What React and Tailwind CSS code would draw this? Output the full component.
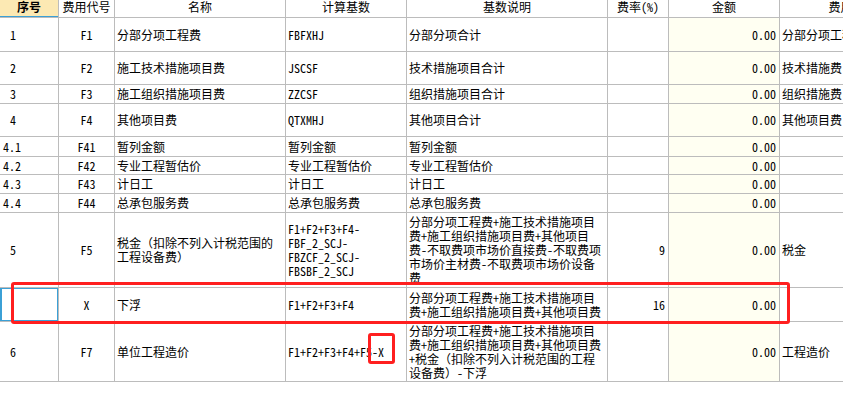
const rows = [
  { h: "h-[34px]", no: "1", code: "F1", name: ["分部分项工程费"], base: ["FBFXHJ"], desc: ["分部分项合计"], rate: "", type: "分部分项工程费" },
  { h: "h-[33px]", no: "2", code: "F2", name: ["施工技术措施项目费"], base: ["JSCSF"], desc: ["技术措施项目合计"], rate: "", type: "技术措施费" },
  { h: "h-[19px]", no: "3", code: "F3", name: ["施工组织措施项目费"], base: ["ZZCSF"], desc: ["组织措施项目合计"], rate: "", type: "组织措施费" },
  { h: "h-[33px]", no: "4", code: "F4", name: ["其他项目费"], base: ["QTXMHJ"], desc: ["其他项目合计"], rate: "", type: "其他项目费" },
  { h: "h-[20px]", no: "4.1", sub: true, code: "F41", name: ["暂列金额"], base: ["暂列金额"], desc: ["暂列金额"], rate: "", type: "" },
  { h: "h-[18px]", no: "4.2", sub: true, code: "F42", name: ["专业工程暂估价"], base: ["专业工程暂估价"], desc: ["专业工程暂估价"], rate: "", type: "" },
  { h: "h-[19px]", no: "4.3", sub: true, code: "F43", name: ["计日工"], base: ["计日工"], desc: ["计日工"], rate: "", type: "" },
  { h: "h-[19px]", no: "4.4", sub: true, code: "F44", name: ["总承包服务费"], base: ["总承包服务费"], desc: ["总承包服务费"], rate: "", type: "" },
  {
    h: "h-[75px]",
    no: "5",
    code: "F5",
    name: ["税金（扣除不列入计税范围的", "工程设备费）"],
    base: ["F1+F2+F3+F4-", "FBF_2_SCJ-", "FBZCF_2_SCJ-", "FBSBF_2_SCJ"],
    desc: [
      "分部分项工程费+施工技术措施项目",
      "费+施工组织措施项目费+其他项目",
      "费-不取费项市场价直接费-不取费项",
      "市场价主材费-不取费项市场价设备",
      "费",
    ],
    rate: "9",
    type: "税金",
  },
  {
    h: "h-[34px]",
    no: "",
    selected: true,
    code: "X",
    name: ["下浮"],
    base: ["F1+F2+F3+F4"],
    desc: ["分部分项工程费+施工技术措施项目", "费+施工组织措施项目费+其他项目费"],
    rate: "16",
    type: "",
  },
  {
    h: "h-[60px]",
    no: "6",
    code: "F7",
    name: ["单位工程造价"],
    base: ["F1+F2+F3+F4+F5-X"],
    desc: [
      "分部分项工程费+施工技术措施项目",
      "费+施工组织措施项目费+其他项目费",
      "+税金（扣除不列入计税范围的工程",
      "设备费）-下浮",
    ],
    rate: "",
    type: "工程造价",
  },
];

function Lines({ lines }) {
  return (
    <div className="leading-[14px] whitespace-nowrap">
      {lines.map((l, i) => (
        <div key={i}>{l}</div>
      ))}
    </div>
  );
}

const cell = "flex items-center overflow-hidden border-r border-[#bcbcbc] shrink-0";

export default function App() {
  return (
    <div className="relative w-[843px] h-[414px] overflow-hidden bg-white text-[12px] text-black font-['Noto_Sans_Mono_CJK_SC','Noto_Sans_CJK_SC',monospace]">
      <div className="flex flex-col w-[1100px]">
        {/* header */}
        <div className="flex h-[18px] border-b border-[#bcbcbc] leading-[14px]">
          <div className={`${cell} relative w-[59px] justify-center items-start bg-[#fce9b3] font-bold`}>
            序号
            <div className="absolute left-0 right-0 -bottom-px h-[2px] bg-[#3ba0d6]"></div>
          </div>
          <div className={`${cell} w-[56px] justify-center items-start`}>费用代号</div>
          <div className={`${cell} w-[171px] justify-center items-start`}>名称</div>
          <div className={`${cell} w-[121px] justify-center items-start`}>计算基数</div>
          <div className={`${cell} w-[201px] justify-center items-start`}>基数说明</div>
          <div className={`${cell} w-[61px] justify-center items-start`}>费率(%)</div>
          <div className={`${cell} w-[111px] justify-center items-start`}>金额</div>
          <div className={`${cell} w-[146px] justify-center items-start`}>费用类别</div>
        </div>

        {rows.map((r, i) => (
          <div key={i} className={`flex ${r.h} border-b border-[#bcbcbc]`}>
            <div className={`${cell} relative w-[59px] ${r.sub ? "pl-[3px]" : "pl-[10px]"}`}>
              {r.no}
              {r.selected && (
                <div className="absolute -top-px left-0 -right-px -bottom-px border-2 border-[#3ba0d6]"></div>
              )}
            </div>
            <div className={`${cell} w-[56px] justify-center`}>{r.code}</div>
            <div className={`${cell} w-[171px] pl-[2px]`}>
              <Lines lines={r.name} />
            </div>
            <div className={`${cell} w-[121px] pl-[2px]`}>
              <Lines lines={r.base} />
            </div>
            <div className={`${cell} w-[201px] pl-[2px]`}>
              <Lines lines={r.desc} />
            </div>
            <div className={`${cell} w-[61px] justify-end pr-[3px]`}>{r.rate}</div>
            <div className={`${cell} w-[111px] justify-end pr-[3px] bg-[#fffff2]`}>0.00</div>
            <div className={`${cell} w-[146px] pl-[2px] whitespace-nowrap`}>{r.type}</div>
          </div>
        ))}
      </div>

      {/* red annotation boxes */}
      <div className="absolute left-[11px] top-[282px] w-[779px] h-[42px] border-[3px] border-[#ff1f1f] rounded-[3px]"></div>
      <div className="absolute left-[368px] top-[333px] w-[27px] h-[31px] border-[3px] border-[#ff1f1f] rounded-[3px]"></div>
    </div>
  );
}
